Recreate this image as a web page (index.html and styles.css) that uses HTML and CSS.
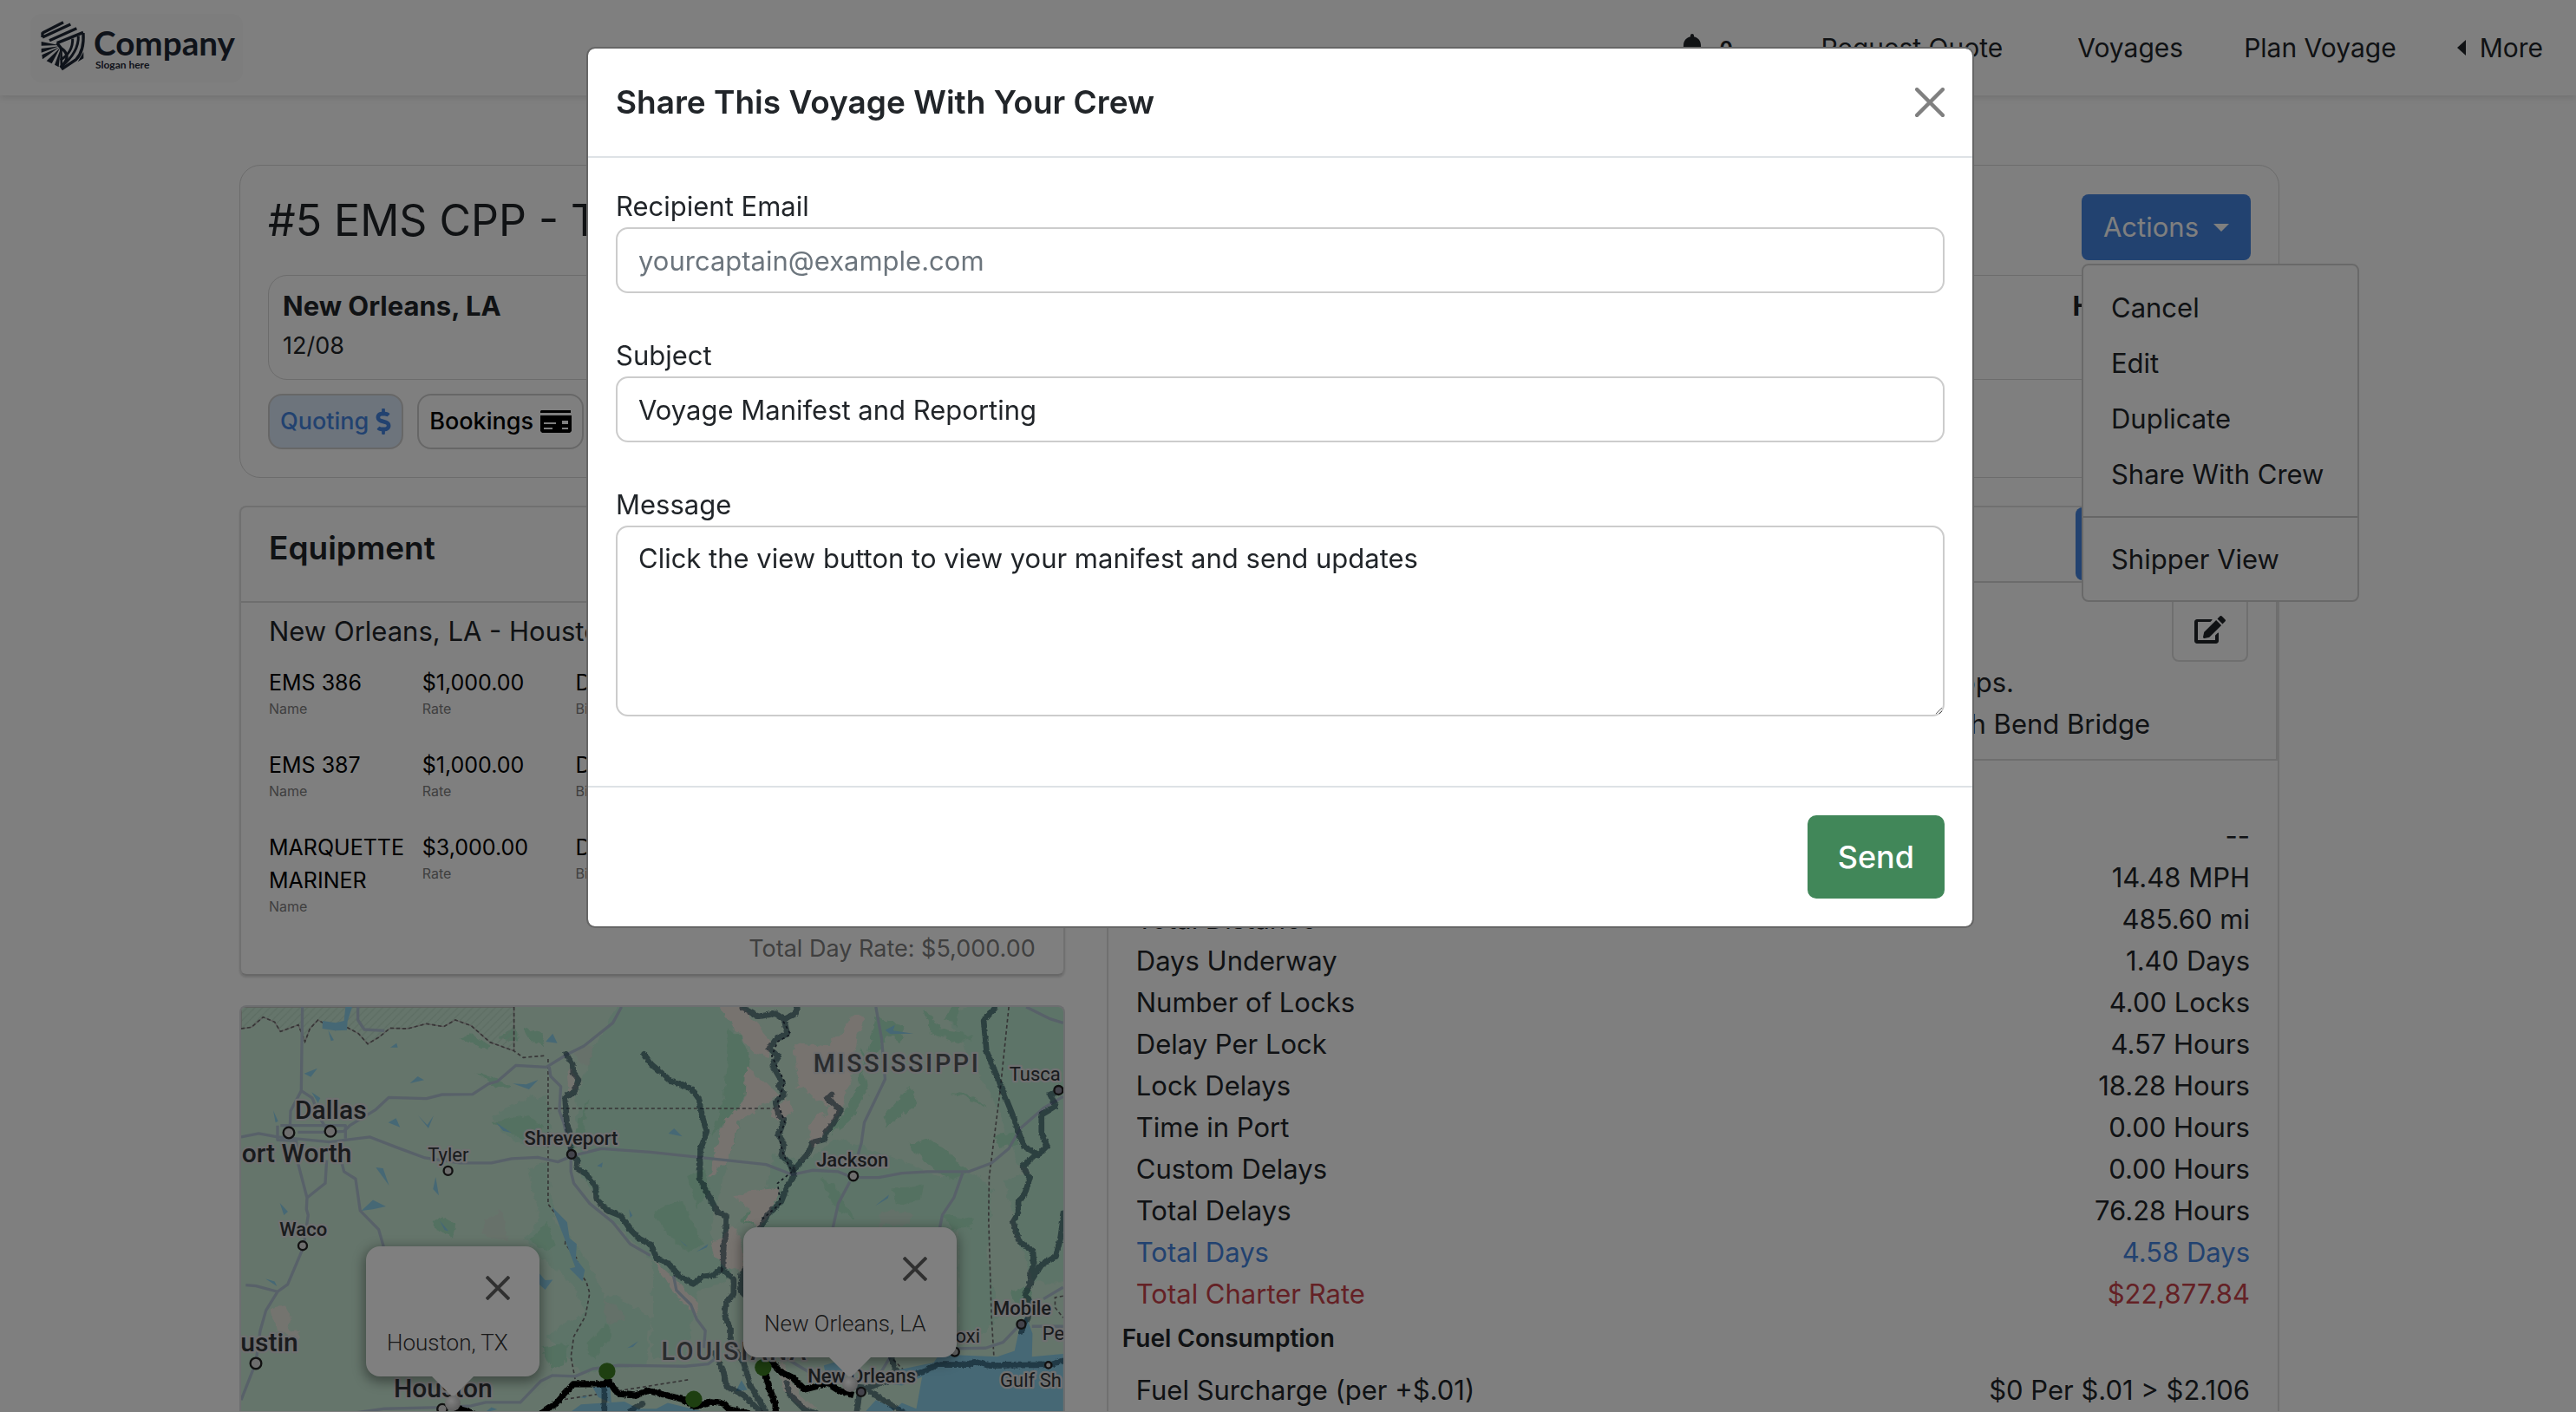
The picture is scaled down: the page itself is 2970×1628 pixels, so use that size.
FILE: index.html
```html
<!DOCTYPE html>
<html lang="en">
<head>
<meta charset="utf-8">
<meta name="viewport" content="width=device-width, initial-scale=1">
<title>Share This Voyage With Your Crew</title>
<link rel="stylesheet" href="styles.css">
</head>
<body>
<header class="navbar">
  <a class="brand" href="#" aria-label="Company">
    <svg class="brand-logo" viewBox="0 0 735 237" aria-hidden="true">
      <g fill="none" stroke="#1e2735" stroke-width="10">
        <path d="M42 66 114 29M42 81 139 36M42 81V64M66 92 160 50M92 101 183 64"/>
        <path d="M183 66Q187 128 158 158L112 189 107 182Q146 146 106 118L92 101"/>
        <path d="M166 77Q168 132 108 182M146 86Q148 132 104 160" stroke-width="9"/>
        <path d="M106 118 108 186" stroke-width="8"/>
      </g>
      <g fill="#1e2735">
        <path d="M38 96 98 108 38 110zM38 120 100 112 38 134zM40 142 101 115 42 157zM56 163 103 117 74 172zM84 176 105 120 98 184zM184 132V154L164 166z"/>
      </g>
      <text class="logo-name" x="219" y="143">Company</text>
      <text class="logo-slogan" x="225" y="189">Slogan here</text>
    </svg>
  </a>
  <nav class="nav-links" aria-label="Main">
    <a class="nav-alerts" href="#" aria-label="Alerts">
      <svg class="bell" viewBox="0 0 448 512" aria-hidden="true"><path fill="currentColor" d="M224 512c35 0 64-29 64-64H160c0 35 29 64 64 64zm215-150c-19-20-55-52-55-154 0-78-54-140-128-155V32c0-18-14-32-32-32s-32 14-32 32v21C118 68 64 130 64 208c0 102-36 134-55 154-6 6-9 14-9 22 0 16 13 32 32 32h384c19 0 32-16 32-32 0-8-3-16-9-22z"/></svg>
      <b>0</b>
    </a>
    <a class="nav-quote" href="#">Request Quote</a>
    <a href="#">Voyages</a>
    <a href="#">Plan Voyage</a>
    <a class="nav-more" href="#">More</a>
  </nav>
</header>

<main class="page">
  <section class="voyage">
    <div class="voyage-top">
      <h1>#5 EMS CPP - T</h1>
      <div class="actions">
        <button class="btn-primary" type="button" aria-expanded="true">Actions</button>
        <ul class="menu">
          <li><a href="#">Cancel</a></li>
          <li><a href="#">Edit</a></li>
          <li><a href="#">Duplicate</a></li>
          <li><a href="#">Share With Crew</a></li>
          <li class="menu-split"><a href="#">Shipper View</a></li>
        </ul>
      </div>
    </div>
    <div class="ports">
      <div><strong>New Orleans, LA</strong><span>12/08</span></div>
      <div><strong>Houston, TX</strong></div>
    </div>
    <div class="tabs">
      <button class="tab tab-active" type="button">Quoting
        <svg class="dollar" viewBox="0 0 288 512" aria-hidden="true"><path fill="currentColor" d="M209 233l-108-31c-12-4-21-15-21-28 0-16 13-29 29-29h66c12 0 24 4 34 10 6 4 14 3 19-2l35-34c7-7 6-18-2-24-24-19-54-29-85-30V16c0-9-7-16-16-16h-32c-9 0-16 7-16 16v49h-2C47 65-6 119 1 184c4 46 39 84 84 97l102 30c12 4 21 15 21 28 0 16-13 29-29 29h-66c-12 0-24-4-34-10-6-4-14-3-19 2l-35 34c-7 7-6 18 2 24 24 19 54 29 85 30v48c0 9 7 16 16 16h32c9 0 16-7 16-16v-49c47-1 90-28 106-73 22-62-15-124-73-141z"/></svg>
      </button>
      <button class="tab" type="button">Bookings
        <svg class="cheque" viewBox="0 0 36 26" aria-hidden="true"><path fill="currentColor" fill-rule="evenodd" d="M1 0h34v3H0V1zM0 6h36v18l-2 2H2l-2-2zM4 14v2h14v-2zM4 20v2h10v-2zM25 12v4h7v-4zM25 20v2h7v-2z"/></svg>
      </button>
    </div>
  </section>

  <div class="columns">
    <div class="col-left">
      <section class="card equipment">
        <h2>Equipment</h2>
        <div class="equipment-body">
          <p class="leg">New Orleans, LA - Houston, TX</p>
          <dl class="unit"><div><dd>EMS 386</dd><dt>Name</dt></div><div><dd>$1,000.00</dd><dt>Rate</dt></div><div><dd>Daily</dd><dt>Billing</dt></div></dl>
          <dl class="unit"><div><dd>EMS 387</dd><dt>Name</dt></div><div><dd>$1,000.00</dd><dt>Rate</dt></div><div><dd>Daily</dd><dt>Billing</dt></div></dl>
          <dl class="unit"><div><dd>MARQUETTE MARINER</dd><dt>Name</dt></div><div><dd>$3,000.00</dd><dt>Rate</dt></div><div><dd>Daily</dd><dt>Billing</dt></div></dl>
          <p class="day-rate">Total Day Rate: $5,000.00</p>
        </div>
      </section>

      <section class="map" aria-label="Route map">
        <svg class="map-canvas" viewBox="24 30 2844 1404" preserveAspectRatio="xMinYMin slice">
          <defs>
            <pattern id="hatch" width="26" height="26" patternUnits="userSpaceOnUse"><path d="M0 26 26 0" stroke="#b8d8c4" stroke-width="3"/></pattern>
            <filter id="meander" filterUnits="userSpaceOnUse" x="0" y="0" width="2900" height="1460"><feTurbulence type="turbulence" baseFrequency=".06" numOctaves="2" seed="4"/><feDisplacementMap in="SourceGraphic" scale="10" xChannelSelector="R" yChannelSelector="G"/></filter>
            <filter id="coast" filterUnits="userSpaceOnUse" x="0" y="0" width="2900" height="1500"><feTurbulence type="turbulence" baseFrequency=".02" numOctaves="3" seed="9"/><feDisplacementMap in="SourceGraphic" scale="26" xChannelSelector="R" yChannelSelector="G"/></filter>
          </defs>
          <path fill="#caead6" d="M0 0h2900v1500H0z"/>
          <g filter="url(#coast)">
          <g fill="#bbe8d0">
            <path d="M1330 10H1700L1760 200 1750 420 1700 560 1640 800 1720 960 1560 1020 1440 900 1300 760 1190 600 1180 330 1240 160z"/>
            <path d="M890 400 980 350 1080 330 1090 480 1040 520 930 470zM1010 590 1080 560 1100 760 1190 860 1280 1020 1230 1120 1160 980 1060 900 1000 830 1050 760z"/>
            <path d="M1860 540 1960 560 2080 480 2200 520 2320 560 2440 620 2560 600 2620 660 2600 900 2640 1100 2560 1180 2500 1180 2500 800H1800z"/>
            <path d="M2460 60 2560 10H2900V700L2700 560 2640 380 2560 240zM2660 620 2900 560V980L2760 980 2700 800zM1440 860 1600 1000 1560 1240 1440 1240zM1080 1160 1300 1020 1440 1100 1420 1260 1200 1290z"/>
          </g>
          <g fill="#a9e3c2">
            <path d="M1705 90 1750 130 1778 210 1760 330 1700 420 1650 470 1690 330 1700 230zM1560 610 1620 580 1640 660 1600 720zM2210 60 2320 90 2300 150 2250 120 2200 230 2160 170 2190 330 2120 420 2060 470 2150 300 2190 200zM2380 30 2440 100 2560 130 2500 150 2400 110z"/>
            <path d="M775 130 810 115 880 160 850 175zM835 250 900 270 960 300 900 305zM995 95 1070 120 1060 160 1010 130zM910 130 970 90 980 150zM680 775 712 748 760 775 750 830 700 805zM890 420 1000 400 1060 440 1000 490 930 450zM830 900 880 860 930 880 920 950zM1060 1200 1150 1190 1140 1260 1090 1280z"/>
            <path d="M2240 400 2330 300 2360 360 2300 400 2250 440zM2330 500 2400 480 2480 540 2540 600 2460 620 2380 560zM2270 650 2380 640 2370 690 2280 710zM2020 620 2070 640 2140 760 2080 730zM2470 320 2540 330 2600 370 2550 350zM2470 30 2500 30 2490 90 2460 70zM2620 470 2700 460 2710 500 2640 510zM1440 740 1540 690 1620 850 1560 870 1500 820zM2680 1010 2740 990 2770 1060 2700 1080z"/>
            <path d="M1010 830 1080 770 1110 850 1070 870zM1160 520 1190 420 1220 340 1200 500zM2440 740 2560 760 2540 790 2480 790zM1750 760 1800 700 1790 790zM1210 1190 1280 1120 1300 1160 1240 1240z"/>
          </g>
          <g fill="#efe7df">
            <path d="M1660 10H1740L1850 140 1840 200 1790 180 1760 140 1730 100zM1765 230 1830 280 1880 330 1800 380 1740 430 1700 560 1640 620 1660 520 1690 420 1760 340zM1930 150 2050 160 2100 110 2140 50 2180 60 2150 130 2130 270 2100 360 2060 430 2000 510 1980 490 2060 370 2000 340 1960 300 2010 250 1990 290 1945 310zM1720 680 1790 660 1880 650 1860 720 1810 790 1770 770 1780 720zM1900 340 1930 380 1880 420 1850 400zM1980 430 2010 400 2040 390 2020 450 1990 470zM1640 840 1690 820 1710 780 1740 800 1760 930 1710 940 1650 880zM1440 900 1530 970 1600 1050 1595 1090 1540 1040z"/>
            <path d="M120 1075 170 1062 194 1105 180 1145 228 1140 215 1178 140 1140zM1145 245 1170 235 1180 310 1150 315zM1880 1240 1960 1370 2020 1420H1970L1890 1350z" opacity=".85"/>
          </g>
          <path fill="#d3ddd3" opacity=".55" d="M1270 1040 1330 1060 1350 1110 1290 1130zM2230 730 2340 740 2330 780 2230 780zM1170 170 1240 160 1220 230 1180 210zM860 760 920 730 940 830 850 810z"/>
          </g>
          <path fill="url(#hatch)" stroke="#b9b5b5" stroke-width="4" d="M24 30H968V182L885 152 820 95 765 75 725 98 665 88 600 105 540 103 500 135 462 158 430 122 380 95 350 110 290 75 262 105 245 150 222 92 160 115 140 82 100 65 60 100 24 105z"/>
          <g fill="none" stroke="#6d6a6c" stroke-width="5" stroke-dasharray="12 9">
            <path d="M24 105 60 100 100 65 140 82 160 115 222 92 245 150 262 105 290 75 350 110 380 95 430 122 462 158 500 135 540 103 600 105 665 88 725 98 765 75 820 95 885 152 968 182 1000 205 1080 198M968 30V182M1086 210V712L1130 770 1150 800 1145 850 1185 900 1195 950 1218 980 1230 1020 1215 1100 1175 1170 1165 1240 1180 1320M1086 381H1870M2680 30 2650 320 2612 620 2610 760 2620 1100 2632 1300M2280 1250 2320 1290 2400 1270 2440 1296 2500 1304M1570 1320 1130 1390M2868 1030 2840 1035 2840 1070 2868 1105"/>
          </g>
          <g fill="#8cd0ea">
            <path d="M385 30H408L392 80 390 110 350 112 305 105 306 78 350 85 380 78zM325 110 345 145 335 148zM268 325 298 345 290 362zM540 170 562 155 566 170zM242 260 288 242 265 272zM608 294 635 270 657 283zM135 388 152 425 143 430zM533 430 560 415 574 446zM636 405 668 438 690 406 672 450zM906 430 960 466 930 458zM1078 150 1102 122 1118 155zM964 295 1010 298 1052 282 1020 315zM490 585 515 588 536 648zM697 618 708 682 688 660zM158 708 186 738 172 750zM440 735 480 698 525 720 480 730zM108 970 140 980 148 996zM710 768 742 806 728 802zM1255 580 1275 568 1272 585zM1366 730 1378 752 1370 760zM1360 1210 1398 1186 1380 1206zM1050 945 1076 975 1102 974 1076 1008 1056 990zM1502 468 1522 450 1550 478zM1598 878 1640 850 1635 862zM2218 718 2265 680 2262 692zM2252 110 2286 92 2280 112 2350 122 2270 124zM1540 835 1570 860 1560 855z"/>
            <path d="M1100 722 1152 775 1160 830 1185 850 1182 900 1213 940 1205 980 1160 935 1180 930 1150 850z"/>
            <path d="M2240 1460 2310 1400 2360 1420 2380 1310 2310 1340 2240 1330 2300 1285 2420 1260 2440 1232 2640 1240 2700 1220 2715 1150 2740 1100 2762 1160 2760 1240 2868 1230V1460zM2040 1270 2110 1250 2110 1300 2080 1340 2050 1320zM1160 1434 1200 1405 1350 1395 1400 1420H1460L1500 1400 1640 1434zM1735 1360 1755 1322 1775 1355zM1240 1345 1300 1340 1305 1400 1260 1380zM1196 1380 1224 1374 1214 1384zM866 1434 890 1415 910 1422zM2310 1430 2220 1390 2180 1434z"/>
          </g>
          <g fill="none" stroke="#b0c2d2" stroke-width="10" stroke-linejoin="round">
            <path d="M236 30 232 320 195 390 192 480M232 320 270 345 300 420 330 470M24 480 85 468 150 480 330 497 470 480 560 515 660 552 780 570 890 570 960 555 1050 550 1120 566 1170 545 1270 520 1440 532 1840 575 1930 610 2000 595 2090 600 2140 620 2230 620 2310 605 2400 600 2540 600 2620 570 2680 520 2720 450 2800 380 2868 340"/>
            <path d="M220 463H330L380 460 400 440 490 385 535 343 665 347 720 333 825 332 880 296 910 288 975 232 1080 238 1150 195 1210 165 1310 85 1340 30M1090 238 1095 270 1130 305 1125 390 1140 430 1165 540V600L1175 640 1230 710 1310 775 1370 850 1440 890"/>
            <path d="M160 440H385V485M150 440V490L215 493 218 560 252 690 315 640 320 560M252 690 250 730 256 750 240 860 185 990 150 1015 110 1080 90 1150 75 1260 24 1390M40 992 75 995 150 1015M370 560 380 600 420 625 436 735 500 800 520 870"/>
            <path d="M420 1434 520 1420 720 1415 820 1410 870 1398H990L1060 1325 1100 1305 1180 1308 1240 1282 1330 1270 1560 1273 1640 1265 1680 1235M1520 960 1530 1010 1580 1060 1600 1110 1630 1150 1625 1210M2220 30 2240 140 2252 280 2180 430 2170 500 2150 570M2130 635 2090 710 2070 800M2520 605 2490 690 2450 750 2440 800M2710 1138 2660 1190 2600 1210 2500 1212M2740 30 2820 70 2868 85M2800 1040 2868 1000M2760 1135H2868M1900 1240 2000 1300 2120 1330 2240 1290 2270 1240M428 30V75L450 108 520 112"/>
          </g>
          <g fill="none" stroke="#0c2038" stroke-opacity=".52" stroke-width="20" stroke-linejoin="round" stroke-linecap="round" filter="url(#meander)">
            <path d="M1145 190 1168 225 1170 255 1188 280 1172 325 1142 340 1148 430 1160 470 1162 530 1185 560 1182 585 1215 605 1248 650 1250 690 1285 730 1335 750 1370 800 1400 830 1440 850 1460 900 1500 915 1540 960 1585 985 1620 960 1660 955 1680 935"/>
            <path d="M1415 190 1440 225 1510 285 1580 310 1605 345 1615 400 1632 460 1610 520 1608 620 1670 740 1700 750 1700 800 1690 860 1690 940 1725 970 1725 1020 1700 1050 1695 1100 1715 1140 1715 1190 1760 1260 1785 1340 1840 1434"/>
            <path d="M1755 30 1810 60 1870 50 1900 70 1910 120 1870 140 1850 170 1880 200 1860 230 1895 290 1880 300 1900 330 1870 360 1880 400 1900 420 1880 470 1900 500 1890 540 1920 570 1935 610 1910 650 1890 700 1840 750 1815 800 1780 920 1755 950 1750 1010 1790 1050M1900 70 1940 50 1945 30"/>
            <path d="M2065 330 2050 345 2080 370 2095 385 2070 430 2045 460 2040 485 2000 495 1985 530 1935 590"/>
            <path d="M2630 30 2590 75 2600 180 2650 300 2690 400 2715 470 2730 510 2775 535 2725 580 2750 620 2730 680 2710 700 2710 740 2692 770 2715 840 2760 870 2765 920 2750 950 2755 980 2735 1020 2750 1050 2745 1100 2720 1150M2850 320 2820 330 2840 370 2790 400 2790 460 2810 510 2780 540M2868 740 2855 830 2840 890 2790 920 2750 980"/>
            <path d="M1660 1225 1690 1290 1700 1340 1760 1370 1820 1430M1910 1330 1920 1370 1970 1420 2010 1434M2160 1370 2150 1434M2140 1340 2190 1345 2230 1330 2300 1310 2380 1290 2430 1265 2540 1265 2560 1255 2610 1268 2820 1265 2868 1250M2270 1240 2290 1290M2200 1360 2310 1430M1278 1345V1420M1410 1400 1370 1425"/>
          </g>
          <g fill="none" stroke="#243040" stroke-width="5" stroke-dasharray="9 10"><path d="M1900 80 1925 125 1880 150 1860 200 1905 290 1880 360 1905 430 1885 480 1900 540 1930 600 1880 640 1890 710 1820 770"/></g>
          <g fill="none" stroke="#000" stroke-width="22" stroke-linejoin="round" filter="url(#meander)">
            <path d="M760 1415 800 1425 830 1440M1050 1440 1110 1400 1170 1332 1280 1332 1290 1318 1325 1365 1385 1372 1430 1355 1500 1372 1550 1385 1590 1410 1650 1395 1690 1400 1710 1420 1780 1434M1830 1280 1850 1350 1870 1400 1870 1440M1850 1250 1890 1290 1930 1310 1970 1350 2050 1330 2090 1355 2140 1370"/>
          </g>
          <g fill="#3c7e22"><circle cx="1290" cy="1290" r="29"/><circle cx="1590" cy="1387" r="29"/><circle cx="1830" cy="1277" r="29"/></g>
          <g fill="#ddd" stroke="#222" stroke-width="7">
            <circle cx="189" cy="465" r="19"/><circle cx="333" cy="460" r="19"/><circle cx="75" cy="1263" r="19"/><circle cx="740" cy="597" r="15"/><circle cx="237" cy="856" r="15"/><circle cx="1167" cy="540" r="15" fill="#889"/><circle cx="2142" cy="615" r="16"/><circle cx="2852" cy="318" r="15" fill="#889"/><circle cx="2723" cy="1128" r="15" fill="#889"/><circle cx="2493" cy="1223" r="15"/><circle cx="2817" cy="1269" r="11"/><circle cx="2169" cy="1362" r="15" fill="#889"/><circle cx="720" cy="1421" r="17"/>
          </g>
          <g class="city city-lg"><text x="210" y="417">Dallas</text><text x="26" y="567">ort Worth</text><text x="22" y="1222">ustin</text><text x="552" y="1380">Houston</text></g>
          <g class="city"><text x="1004" y="506">Shreveport</text><text x="157" y="822">Waco</text><text x="2014" y="581">Jackson</text><text x="2626" y="1094">Mobile</text><text x="1984" y="1328">New Orleans</text></g>
          <g class="city city-sm"><text x="670" y="564">Tyler</text><text x="2682" y="285">Tusca</text><text x="2495" y="1190">oxi</text><text x="2796" y="1182">Pe</text><text x="2650" y="1343">Gulf Sh</text></g>
          <g class="state"><text x="2004" y="254">MISSISSIPPI</text><text x="1478" y="1250">LOUISIANA</text></g>
        </svg>
        <div class="popup popup-houston">
          <button type="button" aria-label="Close"><svg viewBox="0 0 28 28" aria-hidden="true"><path d="M1 1 27 27M27 1 1 27" stroke="currentColor" stroke-width="4"/></svg></button>
          <p>Houston, TX</p>
        </div>
        <div class="popup popup-orleans">
          <button type="button" aria-label="Close"><svg viewBox="0 0 28 28" aria-hidden="true"><path d="M1 1 27 27M27 1 1 27" stroke="currentColor" stroke-width="4"/></svg></button>
          <p>New Orleans, LA</p>
        </div>
      </section>
    </div>

    <section class="card summary">
      <div class="summary-bar"><button class="btn-primary" type="button" aria-label="Update"></button></div>
      <div class="notes">
        <button class="edit" type="button" aria-label="Edit">
          <svg viewBox="0 0 576 512" aria-hidden="true"><path fill="currentColor" d="M402 345l32-32c5-5 14-2 14 6V464c0 26-22 48-48 48H48c-26 0-48-22-48-48V112c0-26 22-48 48-48h274c7 0 10 9 5 14l-32 32c-1 1-3 2-5 2H64v336h320V364c0-2 1-4 2-5z"/><path fill="currentColor" d="M180 300 402 78l96 96-222 222-90 20c-16 2-28-10-26-26zM424 56l39-39c23-23 30-23 53 0l43 43c23 23 23 30 0 53l-39 39z"/></svg>
        </button>
        <p class="note-stops">ops.</p>
        <p class="note-bridge">South Bend Bridge</p>
      </div>
      <dl class="stats">
        <div><dd>--</dd></div>
        <div><dd>14.48 MPH</dd></div>
        <div><dt>Total Distance</dt><dd>485.60 mi</dd></div>
        <div><dt>Days Underway</dt><dd>1.40 Days</dd></div>
        <div><dt>Number of Locks</dt><dd>4.00 Locks</dd></div>
        <div><dt>Delay Per Lock</dt><dd>4.57 Hours</dd></div>
        <div><dt>Lock Delays</dt><dd>18.28 Hours</dd></div>
        <div><dt>Time in Port</dt><dd>0.00 Hours</dd></div>
        <div><dt>Custom Delays</dt><dd>0.00 Hours</dd></div>
        <div><dt>Total Delays</dt><dd>76.28 Hours</dd></div>
        <div class="stat-days"><dt>Total Days</dt><dd>4.58 Days</dd></div>
        <div class="stat-rate"><dt>Total Charter Rate</dt><dd>$22,877.84</dd></div>
      </dl>
      <h3>Fuel Consumption</h3>
      <dl class="stats">
        <div><dt>Fuel Surcharge (per +$.01)</dt><dd>$0 Per $.01 &gt; $2.106</dd></div>
      </dl>
    </section>
  </div>
</main>

<div class="backdrop">
  <form class="modal" role="dialog" aria-modal="true" aria-labelledby="modal-title">
    <div class="modal-header">
      <h2 id="modal-title">Share This Voyage With Your Crew</h2>
      <button class="close" type="button" aria-label="Close"><svg viewBox="0 0 32 32" aria-hidden="true"><path d="M2 2 30 30M30 2 2 30" stroke="currentColor" stroke-width="4" stroke-linecap="round"/></svg></button>
    </div>
    <div class="modal-body">
      <div class="field"><label for="email">Recipient Email</label><input id="email" type="email" placeholder="yourcaptain@example.com"></div>
      <div class="field"><label for="subject">Subject</label><input id="subject" type="text" value="Voyage Manifest and Reporting"></div>
      <div class="field"><label for="message">Message</label><textarea id="message">Click the view button to view your manifest and send updates</textarea></div>
    </div>
    <div class="modal-footer"><button class="send" type="submit">Send</button></div>
  </form>
</div>
</body>
</html>
```
FILE: styles.css
```css
* { box-sizing: border-box; }

body {
  margin: 0;
  overflow: hidden;
  height: 100vh;
  background: #fefefe;
  color: #212529;
  font: 31px/48px Inter, "Liberation Sans", sans-serif;
}

h1, h2, h3, p, dl, dd, ul { margin: 0; padding: 0; }
a { color: inherit; text-decoration: none; }
button, input, textarea { font: inherit; color: inherit; }

/* Top bar */
.navbar {
  display: flex;
  align-items: center;
  justify-content: space-between;
  height: 110px;
  padding: 0 38px 0 35px;
  background: #fff;
  box-shadow: 0 2px 8px rgba(0, 0, 0, .12);
}
.brand {
  display: block;
  width: 245px;
  height: 79px;
  border-radius: 12px;
  background: #fbfbfb;
}
.brand-logo { display: block; width: 100%; height: 100%; }
.logo-name { font: 700 116px Lato, sans-serif; fill: #1e2735; }
.logo-slogan { font: 700 36px Lato, sans-serif; fill: #1e2735; }
.nav-links { display: flex; align-items: center; gap: 70px; font-size: 30px; }
.nav-alerts { display: flex; align-items: center; gap: 18px; margin-right: 32px; }
.nav-alerts b { font-size: 22px; line-height: 24px; }
.bell { width: 28px; height: 34px; }
.nav-quote { margin-right: 16px; }
.nav-more { display: flex; align-items: center; gap: 16px; }
.nav-more::before {
  content: "";
  border: solid transparent;
  border-width: 9px 10px 9px 0;
  border-right-color: currentColor;
}

/* Page grid */
.page { padding: 80px 342px 0 276px; }
.voyage {
  padding: 33px 32px 32px;
  border: 1px solid #d8d8d8;
  border-radius: 24px;
}
.voyage-top { display: flex; justify-content: space-between; }
h1 { font-size: 50px; font-weight: 400; line-height: 60px; }
.actions { position: relative; }
.btn-primary {
  border: 0;
  border-radius: 8px;
  background: #4484e0;
  color: #fff;
}
.actions .btn-primary {
  display: flex;
  align-items: center;
  gap: 17px;
  height: 76px;
  padding: 0 25px;
}
.actions .btn-primary::after {
  content: "";
  border: solid transparent;
  border-width: 9px 9px 0;
  border-top-color: currentColor;
}
.menu {
  position: absolute;
  top: 80px;
  left: 0;
  z-index: 2;
  width: 320px;
  padding: 17px 0 15px;
  border: 2px solid #d2d2d2;
  border-radius: 8px;
  background: #fff;
  list-style: none;
}
.menu a { display: block; padding: 8px 32px; }
.menu-split { margin-top: 16px; padding-top: 16px; border-top: 2px solid #ccc; }
.ports {
  display: flex;
  justify-content: space-between;
  min-height: 121px;
  margin-top: 17px;
  padding: 11px 16px;
  border: 1px solid #d8d8d8;
  border-radius: 22px;
}
.ports strong, .ports span { display: block; }
.ports span { font-size: 27px; line-height: 44px; }
.tabs { display: flex; gap: 16px; margin-top: 16px; }
.tab {
  display: flex;
  align-items: center;
  gap: 8px;
  height: 64px;
  padding: 0 12px;
  border: 2px solid #cfcfcf;
  border-radius: 16px;
  background: #fff;
  color: #000;
  font-size: 27px;
  font-weight: 500;
}
.tab-active { background: #dae8f8; color: #4484e0; }
.dollar { width: 18px; height: 30px; }
.cheque { width: 36px; height: 26px; }

.columns { display: flex; align-items: flex-start; gap: 48px; margin-top: 32px; }
.col-left { flex: 953; min-width: 0; }
.summary { flex: 1350; min-width: 0; }
.card { border: 2px solid #e0e0e0; border-radius: 8px; }

/* Equipment */
.equipment { border-bottom-color: #d0d0d0; box-shadow: 0 2px 2px #ddd; }
.equipment h2 {
  padding: 17px 32px 31px;
  border-bottom: 2px solid #dcdcdc;
  font-size: 37px;
  font-weight: 600;
  line-height: 60px;
}
.equipment-body { padding: 9px 32px 8px; }
.leg { margin-bottom: 16px; }
.unit {
  display: grid;
  grid-template-columns: repeat(5, 1fr);
  margin-bottom: 34px;
  color: #000;
  font-size: 25px;
  line-height: 38px;
}
.unit div { display: flex; flex-direction: column; }
.unit dt { color: #7e7e7e; font-size: 16px; line-height: 23px; }
.unit:nth-of-type(3) { margin-bottom: 16px; }
.day-rate { color: #7e7e7e; font-size: 27px; line-height: 42px; text-align: right; }

/* Map */
.map {
  position: relative;
  overflow: hidden;
  height: 468px;
  margin-top: 34px;
  border: solid #dadce0;
  border-width: 2px 2px 0;
  border-radius: 8px 8px 0 0;
}
.map-canvas { display: block; width: 100%; }
.city, .state {
  font: 500 66px Roboto, sans-serif;
  fill: #33363a;
  stroke: #dfe0e2;
  stroke-width: 14px;
  stroke-linejoin: round;
  paint-order: stroke;
}
.city-lg { font-size: 90px; }
.city-sm { font-weight: 400; }
.state { font-size: 86px; letter-spacing: 8px; fill: #55585c; }
.popup {
  position: absolute;
  height: 150px;
  padding: 34px 30px 0 24px;
  border-radius: 16px;
  background: #fff;
  box-shadow: 0 4px 14px 2px rgba(0, 0, 0, .4);
  color: #333;
  font: 300 26px/30px Roboto, sans-serif;
}
.popup::before {
  content: "";
  position: absolute;
  top: 100%;
  left: calc(50% - 24px);
  border: solid transparent;
  border-width: 24px 24px 0;
  border-top-color: #fff;
}
.popup::after {
  content: "";
  position: absolute;
  top: 172px;
  left: calc(50% - 9px);
  width: 18px;
  height: 18px;
  border-radius: 50%;
  background: radial-gradient(circle at 40% 35%, #fff, #aaa);
}
.popup button { display: block; margin: 0 4px 0 auto; padding: 0; border: 0; background: none; color: #606060; line-height: 0; }
.popup svg { width: 28px; height: 28px; }
.popup p { margin-top: 34px; }
.popup-houston { top: 276px; left: 144px; width: 200px; }
.popup-orleans { top: 254px; left: 579px; width: 246px; }

/* Voyage summary */
.summary { border-bottom: 0; border-radius: 8px 8px 0 0; }
.summary-bar {
  display: flex;
  justify-content: flex-end;
  height: 87px;
  padding-right: 33px;
  border-bottom: 2px solid #d8d8d8;
}
.summary-bar .btn-primary { width: 200px; height: 84px; }
.notes {
  display: flex;
  flex-direction: column;
  padding: 15px 32px 16px;
  border-right: 2px solid #dcdcdc;
  border-bottom: 2px solid #dcdcdc;
  text-align: right;
}
.edit {
  align-self: flex-end;
  width: 88px;
  height: 76px;
  padding: 0 0 4px;
  border: 2px solid #dedede;
  border-radius: 8px;
  background: #fff;
}
.edit svg { width: 36px; height: 32px; vertical-align: middle; }
.note-stops { padding-right: 270px; }
.note-bridge { padding-right: 113px; }
.stats { padding: 0 32px; }
.notes + .stats { margin-top: 63px; }
.stats div { display: flex; }
.stats dd { margin-left: auto; }
.stat-days { color: #4484e0; }
.stat-rate { color: #c9424a; }
h3 { padding: 3px 16px 12px; font-size: 28px; font-weight: 600; line-height: 48px; }

/* Share dialog */
.backdrop {
  position: fixed;
  inset: 0;
  z-index: 10;
  display: flex;
  justify-content: center;
  align-items: flex-start;
  padding: 54px 18px 0 0;
  background: rgba(0, 0, 0, .5);
}
.modal {
  width: 1600px;
  max-width: 100%;
  border: 2px solid #666;
  border-radius: 10px;
  background: #fff;
  background-clip: padding-box;
}
.modal-header {
  display: flex;
  align-items: center;
  justify-content: space-between;
  padding: 32px;
  border-bottom: 2px solid #dee2e6;
}
.modal-header h2 { font-size: 37px; font-weight: 600; line-height: 60px; }
.close { padding: 0; border: 0; background: none; color: #808080; line-height: 0; }
.close svg { width: 34px; height: 34px; }
.modal-body { padding: 32px; }
.field { margin-bottom: 48px; }
.field label { display: block; }
.field input, .field textarea {
  display: block;
  width: 100%;
  height: 76px;
  padding: 12px 24px;
  border: 2px solid #ccc;
  border-radius: 14px;
  background: #fff;
}
.field textarea { height: 220px; }
.field ::placeholder { color: #6c757d; opacity: 1; }
.modal-footer { display: flex; justify-content: flex-end; padding: 32px; border-top: 2px solid #dee2e6; }
.send {
  height: 96px;
  padding: 0 35px;
  border: 0;
  border-radius: 10px;
  background: #418759;
  color: #fff;
  font-size: 36px;
  font-weight: 500;
}
```
